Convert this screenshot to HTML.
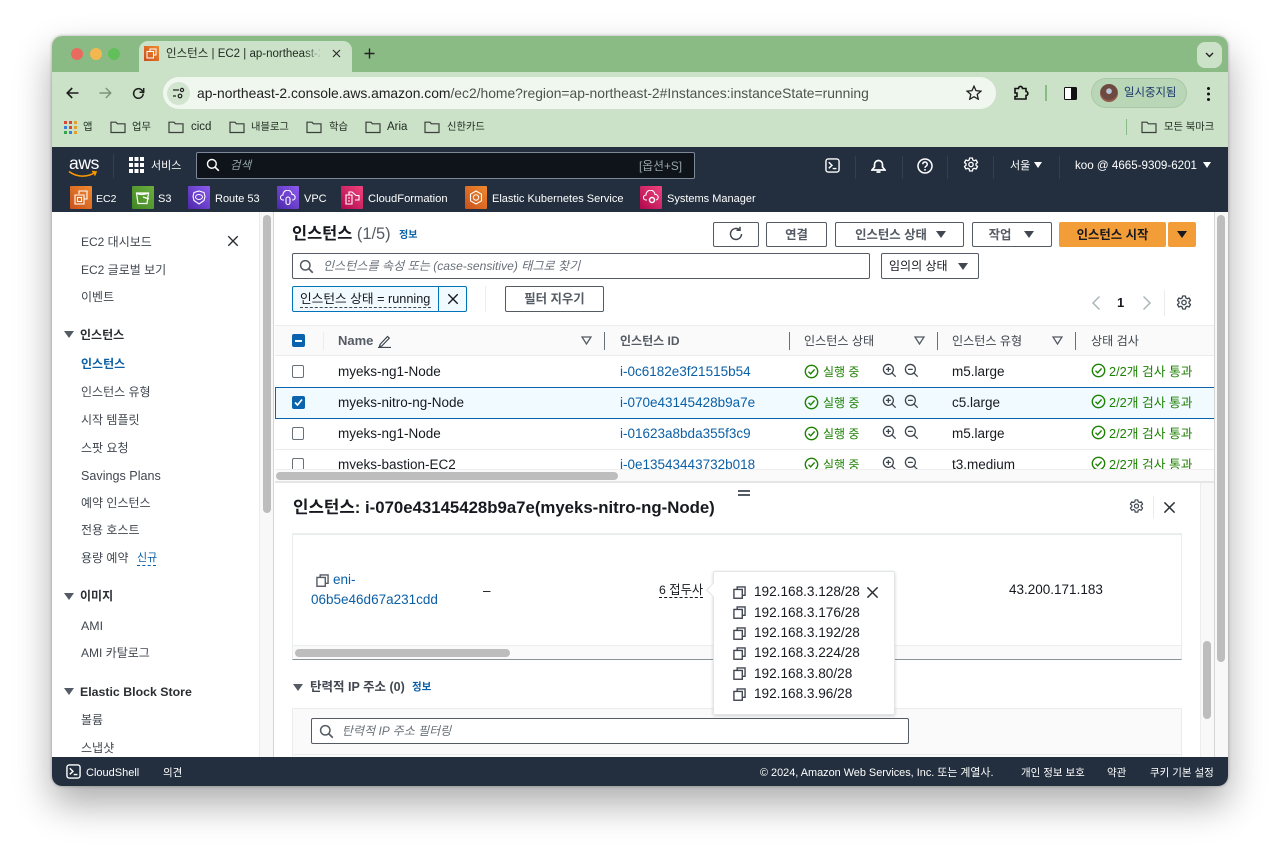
<!DOCTYPE html>
<html lang="ko"><head><meta charset="utf-8"><title>인스턴스 | EC2</title>
<style>
*{box-sizing:border-box}
html,body{margin:0;padding:0;width:1280px;height:854px;overflow:hidden;background:#fff;font-family:"Liberation Sans","Noto Sans CJK KR",sans-serif;color:#16191f}
.a{position:absolute}
.t{position:absolute;white-space:nowrap;line-height:20px;font-size:12px;height:20px;margin-top:1px}
.p{margin-top:0}
.b{font-weight:700}
.w{color:#fff}
.btn{position:absolute;border:1px solid #545b64;border-radius:2px;background:#fff;height:25px;font-size:12.4px;font-weight:700;color:#545b64;line-height:25px;text-align:center;white-space:nowrap}
.sep{position:absolute;width:1px}
.ic{position:absolute;fill:none;stroke:currentColor}
#win{position:absolute;left:52px;top:36px;width:1176px;height:750px;border-radius:10px;box-shadow:0 18px 38px rgba(0,0,0,.33),0 0 3px rgba(0,0,0,.3)}
#clip{position:absolute;left:52px;top:36px;width:1176px;height:750px;border-radius:10px;overflow:hidden;background:#fff}
#in{position:absolute;left:-52px;top:-36px;width:1280px;height:854px}
.nav{color:#414750;font-size:12px;margin-top:2px}
.tri{position:absolute;width:0;height:0;border-left:5px solid transparent;border-right:5px solid transparent;border-top:7px solid #545b64}
.trio{position:absolute}
.cb{position:absolute;left:292px;width:12px;height:13px;border:1px solid #687078;border-radius:2px;background:#fff}
.g{color:#1d8102}
.c{font-size:12.75px;margin-top:2px}
.l{color:#0b5fa5}
.r{font-size:13.5px}
.sv{position:absolute;top:186px;width:22px;height:23px;border-radius:1px}
.bm{font-size:10.3px;color:#1f2a1f;margin-top:2px}
.bl{font-size:11.5px;color:#1f2a1f;margin-top:1px}
.h{color:#414750;margin-top:2px}
.ns{background:#333f4e}
</style></head>
<body>
<svg width="0" height="0" style="position:absolute">
<defs>
<symbol id="copy" viewBox="0 0 14 14"><path d="M4.5 3.5V1h8.5v9h-3" fill="none" stroke="currentColor" stroke-width="1.5"/><rect x="1" y="3.7" width="9" height="9.5" fill="none" stroke="currentColor" stroke-width="1.5"/></symbol>
<symbol id="ok" viewBox="0 0 16 16"><circle cx="8" cy="8" r="6.6" fill="none" stroke="#1d8102" stroke-width="1.5"/><path d="M4.8 8.2l2.3 2.3 4.2-4.7" fill="none" stroke="#1d8102" stroke-width="1.5"/></symbol>
<symbol id="zi" viewBox="0 0 16 16"><circle cx="6.8" cy="6.8" r="5.3" fill="none" stroke="#414750" stroke-width="1.4"/><path d="M10.6 10.6l4 4M4.2 6.8h5.2M6.8 4.2v5.2" fill="none" stroke="#414750" stroke-width="1.4"/></symbol>
<symbol id="zo" viewBox="0 0 16 16"><circle cx="6.8" cy="6.8" r="5.3" fill="none" stroke="#414750" stroke-width="1.4"/><path d="M10.6 10.6l4 4M4.2 6.8h5.2" fill="none" stroke="#414750" stroke-width="1.4"/></symbol>
<symbol id="fold" viewBox="0 0 16 14"><path d="M1 2.2h5l1.4 1.6H15v8.7H1z" fill="none" stroke="#3a3f3a" stroke-width="1.2"/></symbol>
<symbol id="gear" viewBox="0 0 16 16"><path d="M6.6 1h2.8l.4 2 1.3.7 2-.7 1.4 2.5-1.5 1.3v1.4l1.5 1.3-1.4 2.5-2-.7-1.3.7-.4 2H6.6l-.4-2-1.3-.7-2 .7L1.5 9.5 3 8.2V6.8L1.5 5.5 2.9 3l2 .7 1.3-.7z" fill="none" stroke="currentColor" stroke-width="1.3" stroke-linejoin="round"/><circle cx="8" cy="7.5" r="2.2" fill="none" stroke="currentColor" stroke-width="1.3"/></symbol>
<symbol id="x" viewBox="0 0 14 14"><path d="M1.5 1.5l11 11M12.5 1.5l-11 11" fill="none" stroke="currentColor" stroke-width="1.6"/></symbol>
<symbol id="mag" viewBox="0 0 16 16"><circle cx="6.7" cy="6.7" r="5" fill="none" stroke="currentColor" stroke-width="1.6"/><path d="M10.3 10.3l4.4 4.4" fill="none" stroke="currentColor" stroke-width="1.8"/></symbol>
<symbol id="term" viewBox="0 0 16 16"><rect x="1" y="1" width="14" height="14" rx="2.5" fill="none" stroke="#fff" stroke-width="1.5"/><path d="M4 4.5l3.5 3.3L4 11M8.2 11.3h4" fill="none" stroke="#fff" stroke-width="1.5"/></symbol>
</defs>
</svg>

<div id="win"></div>
<div id="clip"><div id="in">

<!-- Chrome -->
<div class="a" style="left:52px;top:36px;width:1176px;height:37px;background:#8bbb85"></div>
<div class="a" style="left:52px;top:72px;width:1176px;height:75px;background:#cbe2c8"></div>
<div class="a" style="left:139px;top:41px;width:213px;height:32px;background:#cbe2c8;border-radius:9px 9px 0 0"></div>
<div class="a" style="left:70.5px;top:48px;width:12px;height:12px;border-radius:50%;background:#e96a5e"></div>
<div class="a" style="left:89.5px;top:48px;width:12px;height:12px;border-radius:50%;background:#f2b84f"></div>
<div class="a" style="left:107.5px;top:48px;width:12px;height:12px;border-radius:50%;background:#62c05a"></div>
<div class="a" style="left:144px;top:46px;width:15px;height:15px;background:linear-gradient(45deg,#c8511b,#f08a2f)"></div>
<svg class="ic" style="left:146px;top:48px;color:#fff" width="11" height="11" viewBox="0 0 11 11"><path d="M4 3V1h6v6H8M1 3.5h6.500V10H1z" stroke-width="1"/></svg>
<div class="t" style="left:166px;top:43px;font-size:11.5px;width:154px;overflow:hidden;color:#1f2a1f">인스턴스 | EC2 | ap-northeast-2</div>
<div class="a" style="left:304px;top:44px;width:18px;height:18px;background:linear-gradient(90deg,rgba(203,226,200,0),#cbe2c8)"></div>
<svg class="ic" style="left:332px;top:49px;color:#222" width="9" height="9"><use href="#x"/></svg>
<svg class="ic" style="left:364px;top:48px;color:#222" width="11" height="11" viewBox="0 0 11 11"><path d="M5.5 0.5v10M.5 5.5h10" stroke-width="1.4"/></svg>
<div class="a" style="left:1197px;top:42px;width:25px;height:26px;border-radius:8px;background:#cbe2c8"></div>
<svg class="ic" style="left:1205px;top:52px;color:#222" width="9" height="6" viewBox="0 0 9 6"><path d="M1 1l3.500 3.500L8 1" stroke-width="1.4"/></svg>

<svg class="ic" style="left:66px;top:87px;color:#1f1f1f" width="13" height="12" viewBox="0 0 13 12"><path d="M12.5 6H1.500M6.200 1L1.200 6l5 5" stroke-width="1.6"/></svg>
<svg class="ic" style="left:99px;top:87px;color:#7c917b" width="13" height="12" viewBox="0 0 13 12"><path d="M.5 6h11M6.800 1l5 5-5 5" stroke-width="1.4"/></svg>
<svg class="ic" style="left:132px;top:87px;color:#1f1f1f" width="13" height="13" viewBox="0 0 13 13"><path d="M11.200 6.500a4.800 4.800 0 1 1-1.300-3.300L11.500 5M11.700 1v4.200H7.500" stroke-width="1.5"/></svg>

<div class="a" style="left:163px;top:77px;width:833px;height:32px;border-radius:16px;background:#f0f7ef"></div>
<div class="a" style="left:167px;top:82px;width:23px;height:23px;border-radius:50%;background:#d2e5cf"></div>
<svg class="ic" style="left:172px;top:87px;color:#222" width="13" height="12" viewBox="0 0 13 12"><path d="M1 3h6M1 9h3" stroke-width="1.3"/><circle cx="10" cy="3" r="1.600" stroke-width="1.2"/><circle cx="8" cy="9" r="1.800" stroke-width="1.2"/></svg>
<div class="t" style="left:197px;top:82px;font-size:13.87px;color:#1f1f1f">ap-northeast-2.console.aws.amazon.com<span style="color:#4c544c">/ec2/home?region=ap-northeast-2#Instances:instanceState=running</span></div>
<svg class="ic" style="left:966px;top:85px;color:#222" width="16" height="15" viewBox="0 0 16 15"><path d="M8 1.200l2 4.500 4.900.5-3.700 3.200 1.100 4.800L8 11.700l-4.300 2.500 1.100-4.800L1.100 6.200 6 5.700z" stroke-width="1.3"/></svg>
<svg class="ic" style="left:1013px;top:85px;color:#111" width="16" height="16" viewBox="0 0 16 16"><path d="M2 3.500h3.500c0-2.800 4-2.800 4 0H13v3c2.500 0 2.500 4 0 4V14H2v-2.500h2v-3.500H2z" stroke-width="1.600"/></svg>
<div class="sep" style="left:1045px;top:85px;height:16px;background:#8bbb85;width:1.500px"></div>
<div class="a" style="left:1064px;top:87px;width:13px;height:13px;border:1.500px solid #111;border-radius:1.500px;background:linear-gradient(90deg,#fff 0,#fff 55%,#111 55%)"></div>
<div class="a" style="left:1091px;top:78px;width:96px;height:30px;border-radius:15px;background:#b9d6b6;border:1px solid #a8c9a6"></div>
<div class="a" style="left:1100px;top:84px;width:18px;height:18px;border-radius:50%;background:radial-gradient(circle at 50% 40%,#b9c6d8 0 18%,#6d4a40 22% 60%,#8f5a4a 62%)"></div>
<div class="t" style="left:1124px;top:82px;font-size:11.4px;color:#16356a">일시중지됨</div>
<div class="a" style="left:1206.500px;top:87px;width:3px;height:3px;border-radius:50%;background:#111;box-shadow:0 5.500px 0 #111,0 11px 0 #111"></div>

<svg class="a" style="left:64px;top:121px" width="13" height="13" viewBox="0 0 13 13"><g><rect x="0" y="0" width="3" height="3" fill="#d9453a"/><rect x="5" y="0" width="3" height="3" fill="#d9453a"/><rect x="10" y="0" width="3" height="3" fill="#e0a030"/><rect x="0" y="5" width="3" height="3" fill="#3a7fd9"/><rect x="5" y="5" width="3" height="3" fill="#d9453a"/><rect x="10" y="5" width="3" height="3" fill="#e0a030"/><rect x="0" y="10" width="3" height="3" fill="#3aa14f"/><rect x="5" y="10" width="3" height="3" fill="#3a7fd9"/><rect x="10" y="10" width="3" height="3" fill="#e0a030"/></g></svg>
<div class="t bm" style="left:83px;top:116px">앱</div>
<svg class="a" style="left:110px;top:120px" width="16" height="14"><use href="#fold"/></svg><div class="t bm" style="left:132px;top:116px">업무</div>
<svg class="a" style="left:168px;top:120px" width="16" height="14"><use href="#fold"/></svg><div class="t bl" style="left:191px;top:116px">cicd</div>
<svg class="a" style="left:229px;top:120px" width="16" height="14"><use href="#fold"/></svg><div class="t bm" style="left:251px;top:116px">내블로그</div>
<svg class="a" style="left:306px;top:120px" width="16" height="14"><use href="#fold"/></svg><div class="t bm" style="left:329px;top:116px">학습</div>
<svg class="a" style="left:365px;top:120px" width="16" height="14"><use href="#fold"/></svg><div class="t bl" style="left:387px;top:116px">Aria</div>
<svg class="a" style="left:424px;top:120px" width="16" height="14"><use href="#fold"/></svg><div class="t bm" style="left:447px;top:116px">신한카드</div>
<div class="sep" style="left:1125.500px;top:119px;height:16px;background:#8bbb85;width:1.500px"></div>
<svg class="a" style="left:1141px;top:120px" width="16" height="14"><use href="#fold"/></svg><div class="t bm" style="left:1164px;top:116px">모든 북마크</div>

<!-- AWS nav -->
<div class="a" style="left:52px;top:147px;width:1176px;height:65px;background:#232f3e"></div>
<div class="t w" style="left:69px;top:152px;font-size:17.500px;letter-spacing:-.4px">aws</div>
<svg class="ic" style="left:68px;top:170px;color:#f90" width="30" height="9" viewBox="0 0 30 9"><path d="M1 1.500c8 6 18 6 26 1M24 1.500l4 .5-1.500 3.500" stroke-width="1.600"/></svg>
<div class="sep ns" style="left:113px;top:154px;height:24px"></div>
<svg class="a" style="left:129px;top:157px" width="15" height="16" viewBox="0 0 15 16" fill="#fff"><rect width="4" height="4" x="0" y="0"/><rect width="4" height="4" x="5.500" y="0"/><rect width="4" height="4" x="11" y="0"/><rect width="4" height="4" x="0" y="6"/><rect width="4" height="4" x="5.500" y="6"/><rect width="4" height="4" x="11" y="6"/><rect width="4" height="4" x="0" y="12"/><rect width="4" height="4" x="5.500" y="12"/><rect width="4" height="4" x="11" y="12"/></svg>
<div class="t w" style="left:151px;top:155px;font-size:11px">서비스</div>
<div class="a" style="left:196px;top:152px;width:499px;height:27px;background:#0f141a;border:1px solid #7d8998;border-radius:2px"></div>
<svg class="a" style="left:206px;top:158px;color:#fff" width="14" height="14"><use href="#mag"/></svg>
<div class="t" style="left:230px;top:155px;font-size:11.500px;font-style:italic;color:#95a5a6">검색</div>
<div class="t" style="left:639px;top:155px;font-size:11.800px;color:#95a5a6">[옵션+S]</div>

<svg class="a" style="left:825px;top:158px" width="15" height="15"><use href="#term"/></svg>
<div class="sep ns" style="left:855px;top:156px;height:23px"></div>
<svg class="ic" style="left:871px;top:158px;color:#fff" width="15" height="16" viewBox="0 0 15 16"><path d="M1 12h13L11.500 9V6.500a4 4 0 0 0-8 0V9zM5.500 14h4" stroke-width="1.700"/></svg>
<div class="sep ns" style="left:902px;top:156px;height:23px"></div>
<svg class="ic" style="left:917px;top:158px;color:#fff" width="16" height="16" viewBox="0 0 16 16"><circle cx="8" cy="8" r="7" stroke-width="1.500"/><path d="M5.800 6.200a2.200 2.200 0 1 1 3.300 1.900c-.8.500-1.100.9-1.100 1.800M8 11v1.600" stroke-width="1.500"/></svg>
<div class="sep ns" style="left:947px;top:156px;height:23px"></div>
<svg class="a" style="left:963px;top:157px;color:#fff" width="16" height="16"><use href="#gear"/></svg>
<div class="sep ns" style="left:993px;top:156px;height:23px"></div>
<div class="t w" style="left:1010px;top:155px;font-size:11px">서울</div>
<div class="a" style="left:1034px;top:162px;border-left:4px solid transparent;border-right:4px solid transparent;border-top:6px solid #fff"></div>
<div class="sep ns" style="left:1059px;top:156px;height:23px"></div>
<div class="t w" style="left:1075px;top:155px;font-size:11.600px">koo @ 4665-9309-6201</div>
<div class="a" style="left:1203px;top:162px;border-left:4px solid transparent;border-right:4px solid transparent;border-top:6px solid #fff"></div>

<div class="sv" style="left:70px;background:linear-gradient(45deg,#c8511b,#f08a2f)"></div>
<svg class="ic" style="left:74px;top:190px;color:#fff" width="14" height="15" viewBox="0 0 14 15"><path d="M5 4V1h8v8h-3M1 5h9v9H1zM3.500 7.500h4v4h-4z" stroke-width="1.100"/></svg>
<div class="t w" style="left:96px;top:188px;font-size:10.500px">EC2</div>
<div class="sv" style="left:132px;background:linear-gradient(45deg,#3f8624,#6cae3e)"></div>
<svg class="ic" style="left:135px;top:191px;color:#fff" width="16" height="14" viewBox="0 0 16 14"><path d="M1.500 2h12l-1.500 10.500H3zM1.500 2c3 2 8 2 12 0M8 6l6 2" stroke-width="1.200"/></svg>
<div class="t w" style="left:158px;top:188px;font-size:11px">S3</div>
<div class="sv" style="left:188px;background:linear-gradient(45deg,#4d27aa,#8c5cf0)"></div>
<svg class="ic" style="left:192px;top:190px;color:#fff" width="14" height="15" viewBox="0 0 14 15"><path d="M7 1l5 1.500 1 4-1 4-5 3.500-5-3.500-1-4 1-4z" stroke-width="1.100"/><ellipse cx="7" cy="7" rx="3.500" ry="2.500" stroke-width="1"/></svg>
<div class="t w" style="left:215px;top:188px;font-size:11px">Route 53</div>
<div class="sv" style="left:277px;background:linear-gradient(45deg,#4d27aa,#8c5cf0)"></div>
<svg class="ic" style="left:280px;top:190px;color:#fff" width="16" height="15" viewBox="0 0 16 15"><path d="M4 10H3a2.500 2.500 0 0 1 0-5 4.500 4.500 0 0 1 9-.5 2.800 2.800 0 0 1 1 5.500h-1" stroke-width="1.100"/><rect x="6" y="7" width="4" height="7.500" rx="2" stroke-width="1.100"/></svg>
<div class="t w" style="left:304px;top:188px;font-size:11px">VPC</div>
<div class="sv" style="left:341px;background:linear-gradient(45deg,#b0084d,#f0447e)"></div>
<svg class="ic" style="left:345px;top:190px;color:#fff" width="15" height="15" viewBox="0 0 15 15"><path d="M1 5h6v9H1zM4 5V2h3l4 3.500h3V10h-4M3 8h2M3 11h2" stroke-width="1.100"/></svg>
<div class="t w" style="left:368px;top:188px;font-size:11.200px">CloudFormation</div>
<div class="sv" style="left:465px;background:linear-gradient(45deg,#c8511b,#f08a2f)"></div>
<svg class="ic" style="left:469px;top:190px;color:#fff" width="14" height="15" viewBox="0 0 14 15"><path d="M7 1l5.500 3.200v6.600L7 14l-5.500-3.200V4.200z" stroke-width="1.100"/><circle cx="7" cy="7.500" r="2.700" stroke-width="1"/></svg>
<div class="t w" style="left:492px;top:188px;font-size:11px">Elastic Kubernetes Service</div>
<div class="sv" style="left:640px;background:linear-gradient(45deg,#b0084d,#f0447e)"></div>
<svg class="ic" style="left:643px;top:190px;color:#fff" width="16" height="15" viewBox="0 0 16 15"><path d="M4 10H3a2.500 2.500 0 0 1 0-5 4.500 4.500 0 0 1 9-.5 2.800 2.800 0 0 1 1 5.500" stroke-width="1.100"/><circle cx="9" cy="10" r="2.500" stroke-width="1.500"/></svg>
<div class="t w" style="left:667px;top:188px;font-size:11px">Systems Manager</div>

<!-- Sidebar -->
<div class="a" style="left:259px;top:212px;width:15px;height:545px;background:#f8f8f8;border-left:1px solid #ececec;border-right:1px solid #d5d5d5"></div>
<div class="a" style="left:263px;top:215px;width:8px;height:298px;border-radius:4px;background:#bdbdbd"></div>
<div class="t nav" style="left:81px;top:230px">EC2 대시보드</div>
<svg class="a" style="left:227px;top:235px;color:#2a2e33" width="12" height="12"><use href="#x"/></svg>
<div class="t nav" style="left:81px;top:258px">EC2 글로벌 보기</div>
<div class="t nav" style="left:81px;top:285px">이벤트</div>
<div class="tri" style="left:64px;top:331px"></div><div class="t b" style="left:80px;top:324px;color:#2a2e33">인스턴스</div>
<div class="t b" style="left:81px;top:353px;color:#0b5fa5">인스턴스</div>
<div class="t nav" style="left:81px;top:380px">인스턴스 유형</div>
<div class="t nav" style="left:81px;top:408px">시작 템플릿</div>
<div class="t nav" style="left:81px;top:436px">스팟 요청</div>
<div class="t nav" style="left:81px;top:464px;font-size:12.600px">Savings Plans</div>
<div class="t nav" style="left:81px;top:491px">예약 인스턴스</div>
<div class="t nav" style="left:81px;top:518px">전용 호스트</div>
<div class="t nav" style="left:81px;top:546px">용량 예약</div>
<div class="t b" style="left:137px;top:547px;color:#0b5fa5;font-size:11px;font-weight:400;border-bottom:0">신규</div>
<div class="a" style="left:137px;top:565px;width:19px;border-top:1px dashed #0b5fa5"></div>
<div class="tri" style="left:64px;top:593px"></div><div class="t b" style="left:80px;top:585px;color:#2a2e33">이미지</div>
<div class="t nav" style="left:81px;top:614px;font-size:12.400px">AMI</div>
<div class="t nav" style="left:81px;top:641px">AMI 카탈로그</div>
<div class="tri" style="left:64px;top:688px"></div><div class="t b" style="left:80px;top:681px;color:#2a2e33;font-size:12.350px">Elastic Block Store</div>
<div class="t nav" style="left:81px;top:708px">볼륨</div>
<div class="t nav" style="left:81px;top:736px">스냅샷</div>

<!-- Top panel -->
<div class="t b" style="left:292px;top:223px;font-size:16.400px">인스턴스 <span style="font-weight:400;color:#545b64">(1/5)</span></div>
<div class="t" style="left:399px;top:225px;font-size:10px;font-weight:700;color:#0b5fa5">정보</div>
<div class="btn" style="left:713px;top:222px;width:46px"></div>
<svg class="ic" style="left:728px;top:226px;color:#414750" width="16" height="16" viewBox="0 0 16 16"><path d="M13.500 8a5.500 5.500 0 1 1-2-4.300M12 .8v3.400H8.500" stroke-width="1.500"/></svg>
<div class="btn" style="left:766px;top:222px;width:61px">연결</div>
<div class="btn" style="left:835px;top:222px;width:129px;padding-right:17px">인스턴스 상태</div><div class="tri" style="left:936px;top:231px;border-top-color:#414750"></div>
<div class="btn" style="left:972px;top:222px;width:80px;padding-right:24px">작업</div><div class="tri" style="left:1024px;top:231px;border-top-color:#414750"></div>
<div class="btn" style="left:1059px;top:222px;width:107px;background:#f29d38;border-color:#f29d38;color:#16191f">인스턴스 시작</div>
<div class="btn" style="left:1168px;top:222px;width:28px;background:#f29d38;border-color:#f29d38"></div><div class="tri" style="left:1177px;top:231px;border-top-color:#16191f"></div>

<div class="a" style="left:292px;top:253px;width:578px;height:26px;border:1px solid #545b64;border-radius:2px"></div>
<svg class="a" style="left:299px;top:259px;color:#545b64" width="15" height="15"><use href="#mag"/></svg>
<div class="t" style="left:323px;top:255px;font-style:italic;color:#687078;font-size:12.100px">인스턴스를 속성 또는 (case-sensitive) 태그로 찾기</div>
<div class="a" style="left:881px;top:253px;width:98px;height:26px;border:1px solid #545b64;border-radius:2px"></div>
<div class="t" style="left:889px;top:255px;color:#16191f">임의의 상태</div>
<div class="tri" style="left:958px;top:263px;border-top-color:#414750"></div>

<div class="a" style="left:292px;top:286px;width:175px;height:26px;border:1px solid #0073bb;border-radius:2px;background:#f1faff"></div>
<div class="a" style="left:438px;top:286px;width:1px;height:26px;background:#0073bb"></div>
<div class="t" style="left:300px;top:288px;font-size:12.700px">인스턴스 상태 = running</div>
<div class="a" style="left:300px;top:307px;width:131px;border-top:1px dashed #414750"></div>
<svg class="a" style="left:447px;top:293px;color:#16191f" width="12" height="12"><use href="#x"/></svg>
<div class="sep" style="left:485px;top:286px;height:26px;background:#eaeded"></div>
<div class="btn" style="left:505px;top:286px;width:99px;height:26px;line-height:25px">필터 지우기</div>

<svg class="ic" style="left:1091px;top:295px;color:#aab7b8" width="10" height="16" viewBox="0 0 10 16"><path d="M8.500 1.500L2 8l6.500 6.500" stroke-width="1.500"/></svg>
<div class="t b" style="left:1117px;top:292px;font-size:13px">1</div>
<svg class="ic" style="left:1142px;top:295px;color:#aab7b8" width="10" height="16" viewBox="0 0 10 16"><path d="M1.500 1.500L8 8l-6.500 6.500" stroke-width="1.500"/></svg>
<div class="sep" style="left:1164px;top:290px;height:26px;background:#eaeded"></div>
<svg class="a" style="left:1176px;top:295px;color:#414750" width="16" height="16"><use href="#gear"/></svg>

<!-- Table -->
<div class="a" style="left:275px;top:325px;width:940px;height:31px;background:#fafafa;border-top:1px solid #eaeded;border-bottom:1px solid #eaeded"></div>
<div class="a" style="left:292px;top:334px;width:13px;height:13px;border-radius:2px;background:#0b63ad"></div><div class="a" style="left:295px;top:340px;width:7px;height:2px;background:#fff"></div>
<div class="sep" style="left:323px;top:332px;height:18px;background:#eaeded"></div>
<div class="t b" style="left:338px;top:330px;color:#545b64;font-size:13px">Name</div>
<svg class="ic" style="left:378px;top:334px;color:#414750" width="14" height="14" viewBox="0 0 14 14"><path d="M2 10.500L9.500 2.500l1.800 1.700L3.800 12 1.500 12.500zM0 13.500h13" stroke-width="1.200"/></svg>
<svg class="trio" style="left:581px;top:336px" width="11" height="9" viewBox="0 0 11 9"><path d="M1 1h9L5.500 8z" fill="none" stroke="#545b64" stroke-width="1.300"/></svg>
<div class="sep" style="left:604px;top:332px;height:18px;background:#687078"></div>
<div class="t b" style="left:620px;top:330px;color:#545b64">인스턴스 ID</div>
<div class="sep" style="left:789px;top:332px;height:18px;background:#687078"></div>
<div class="t h" style="left:804px;top:329px;font-size:12.100px">인스턴스 상태</div>
<svg class="trio" style="left:914px;top:336px" width="11" height="9" viewBox="0 0 11 9"><path d="M1 1h9L5.500 8z" fill="none" stroke="#545b64" stroke-width="1.300"/></svg>
<div class="sep" style="left:937px;top:332px;height:18px;background:#687078"></div>
<div class="t h" style="left:952px;top:329px;font-size:12.100px">인스턴스 유형</div>
<svg class="trio" style="left:1052px;top:336px" width="11" height="9" viewBox="0 0 11 9"><path d="M1 1h9L5.500 8z" fill="none" stroke="#545b64" stroke-width="1.300"/></svg>
<div class="sep" style="left:1075px;top:332px;height:18px;background:#687078"></div>
<div class="t h" style="left:1091px;top:329px;font-size:12.100px">상태 검사</div>
<div class="sep" style="left:1214px;top:332px;height:18px;background:#687078"></div>

<div class="a" style="left:275px;top:387px;width:940px;height:32px;background:#f1faff;border:1px solid #0b63ad;border-right:0;border-left:1px solid #0b63ad"></div>
<div class="a" style="left:275px;top:449px;width:940px;height:1px;background:#eaeded"></div>

<div class="cb" style="top:365px"></div>
<div class="t r" style="left:338px;top:361px">myeks-ng1-Node</div>
<div class="t r l" style="left:620px;top:361px">i-0c6182e3f21515b54</div>
<svg class="a" style="left:804px;top:364px" width="15" height="15"><use href="#ok"/></svg><div class="t g" style="left:823px;top:361px">실행 중</div>
<svg class="a" style="left:882px;top:363px" width="15" height="15"><use href="#zi"/></svg><svg class="a" style="left:904px;top:363px" width="15" height="15"><use href="#zo"/></svg>
<div class="t r" style="left:952px;top:361px">m5.large</div>
<svg class="a" style="left:1091px;top:363px" width="15" height="15"><use href="#ok"/></svg><div class="t g c" style="left:1109px;top:360px">2/2개 검사 통과</div>

<div class="a" style="left:292px;top:396px;width:13px;height:13px;border-radius:2px;background:#0b63ad"></div>
<svg class="ic" style="left:294px;top:398px;color:#fff" width="9" height="9" viewBox="0 0 9 9"><path d="M1 4.500l2.500 2.500L8 1.500" stroke-width="1.700"/></svg>
<div class="t r" style="left:338px;top:392px">myeks-nitro-ng-Node</div>
<div class="t r l" style="left:620px;top:392px">i-070e43145428b9a7e</div>
<svg class="a" style="left:804px;top:395px" width="15" height="15"><use href="#ok"/></svg><div class="t g" style="left:823px;top:392px">실행 중</div>
<svg class="a" style="left:882px;top:394px" width="15" height="15"><use href="#zi"/></svg><svg class="a" style="left:904px;top:394px" width="15" height="15"><use href="#zo"/></svg>
<div class="t r" style="left:952px;top:392px">c5.large</div>
<svg class="a" style="left:1091px;top:394px" width="15" height="15"><use href="#ok"/></svg><div class="t g c" style="left:1109px;top:391px">2/2개 검사 통과</div>

<div class="cb" style="top:427px"></div>
<div class="t r" style="left:338px;top:423px">myeks-ng1-Node</div>
<div class="t r l" style="left:620px;top:423px">i-01623a8bda355f3c9</div>
<svg class="a" style="left:804px;top:426px" width="15" height="15"><use href="#ok"/></svg><div class="t g" style="left:823px;top:423px">실행 중</div>
<svg class="a" style="left:882px;top:425px" width="15" height="15"><use href="#zi"/></svg><svg class="a" style="left:904px;top:425px" width="15" height="15"><use href="#zo"/></svg>
<div class="t r" style="left:952px;top:423px">m5.large</div>
<svg class="a" style="left:1091px;top:425px" width="15" height="15"><use href="#ok"/></svg><div class="t g c" style="left:1109px;top:422px">2/2개 검사 통과</div>

<div class="cb" style="top:458px"></div>
<div class="t r" style="left:338px;top:454px">myeks-bastion-EC2</div>
<div class="t r l" style="left:620px;top:454px">i-0e13543443732b018</div>
<svg class="a" style="left:804px;top:457px" width="15" height="15"><use href="#ok"/></svg><div class="t g" style="left:823px;top:454px">실행 중</div>
<svg class="a" style="left:882px;top:456px" width="15" height="15"><use href="#zi"/></svg><svg class="a" style="left:904px;top:456px" width="15" height="15"><use href="#zo"/></svg>
<div class="t r" style="left:952px;top:454px">t3.medium</div>
<svg class="a" style="left:1091px;top:456px" width="15" height="15"><use href="#ok"/></svg><div class="t g c" style="left:1109px;top:453px">2/2개 검사 통과</div>

<div class="a" style="left:275px;top:469px;width:940px;height:12px;background:#fafafa;border-top:1px solid #eee"></div>
<div class="a" style="left:276px;top:472px;width:342px;height:8px;border-radius:4px;background:#bdbdbd"></div>
<div class="a" style="left:275px;top:481px;width:940px;height:2px;background:#e4e6e6"></div>

<!-- Right scrollbars -->
<div class="a" style="left:1214px;top:212px;width:14px;height:545px;background:#f8f8f8;border-left:1px solid #d5d5d5"></div>
<div class="a" style="left:1217px;top:215px;width:8px;height:447px;border-radius:4px;background:#bdbdbd"></div>

<!-- Detail panel -->
<div class="a" style="left:738px;top:490px;width:12px;height:1.500px;background:#545b64"></div>
<div class="a" style="left:738px;top:494px;width:12px;height:1.500px;background:#545b64"></div>
<div class="t b" style="left:293px;top:498px;font-size:16.800px;line-height:18px">인스턴스: i-070e43145428b9a7e(myeks-nitro-ng-Node)</div>
<svg class="a" style="left:1129px;top:499px;color:#414750" width="15" height="15"><use href="#gear"/></svg>
<div class="sep" style="left:1153px;top:496px;height:22px;background:#eaeded"></div>
<svg class="a" style="left:1163px;top:501px;color:#2a2e33" width="13" height="13"><use href="#x"/></svg>

<div class="a" style="left:1200px;top:483px;width:14px;height:274px;background:#f8f8f8;border-left:1px solid #ececec"></div>
<div class="a" style="left:1203px;top:641px;width:8px;height:78px;border-radius:4px;background:#bdbdbd"></div>

<div class="a" style="left:292px;top:533px;width:890px;height:127px;border:1px solid #eaeded;border-top:2px solid #eaeded;border-bottom:1px solid #879596"></div>
<div class="a" style="left:293px;top:645px;width:888px;height:14px;background:#fafafa;border-top:1px solid #eaeded"></div>
<div class="a" style="left:295px;top:649px;width:215px;height:8px;border-radius:4px;background:#bdbdbd"></div>
<svg class="a" style="left:316px;top:574px;color:#545b64" width="13" height="13"><use href="#copy"/></svg>
<div class="t r l" style="left:333px;top:570px;margin-top:0">eni-</div>
<div class="t r l" style="left:311px;top:590px;margin-top:0">06b5e46d67a231cdd</div>
<div class="t r" style="left:483px;top:581px;margin-top:0">–</div>
<div class="t p" style="left:659px;top:580px;font-size:12.300px">6 접두사</div>
<div class="a" style="left:659px;top:597px;width:44px;border-top:1px dashed #16191f"></div>
<div class="t r p" style="left:1009px;top:580px">43.200.171.183</div>

<div class="tri" style="left:293px;top:684px;border-left-width:5px;border-right-width:5px;border-top-color:#545b64"></div>
<div class="t b" style="left:310px;top:676px;font-size:12.500px;color:#414750">탄력적 IP 주소 (0)</div>
<div class="t" style="left:412px;top:676px;font-size:10.500px;color:#0b5fa5;font-weight:700">정보</div>
<div class="a" style="left:292px;top:708px;width:890px;height:49px;background:#fafafa;border:1px solid #eaeded;border-bottom:0"></div>
<div class="a" style="left:292px;top:754px;width:890px;height:1px;background:#eaeded"></div>
<div class="a" style="left:311px;top:718px;width:598px;height:26px;border:1px solid #545b64;border-radius:2px;background:#fff"></div>
<svg class="a" style="left:319px;top:724px;color:#545b64" width="15" height="15"><use href="#mag"/></svg>
<div class="t" style="left:342px;top:720px;font-style:italic;color:#687078">탄력적 IP 주소 필터링</div>

<!-- Popover -->
<div class="a" style="left:713px;top:571px;width:182px;height:144px;background:#fff;border:1px solid #e3e6e6;border-radius:2px;box-shadow:0 1px 3px rgba(0,21,41,.18)"></div>
<div class="a" style="left:708px;top:585px;width:10px;height:10px;background:#fff;transform:rotate(45deg);border-left:1px solid #e3e6e6;border-bottom:1px solid #e3e6e6"></div>
<svg class="a" style="left:733px;top:586px;color:#414750" width="13" height="13"><use href="#copy"/></svg><div class="t r p" style="left:754px;top:582px;font-size:13.600px">192.168.3.128/28</div>
<svg class="a" style="left:866px;top:586px;color:#2a2e33" width="13" height="13"><use href="#x"/></svg>
<svg class="a" style="left:733px;top:606px;color:#414750" width="13" height="13"><use href="#copy"/></svg><div class="t r p" style="left:754px;top:603px;font-size:13.600px">192.168.3.176/28</div>
<svg class="a" style="left:733px;top:627px;color:#414750" width="13" height="13"><use href="#copy"/></svg><div class="t r p" style="left:754px;top:623px;font-size:13.600px">192.168.3.192/28</div>
<svg class="a" style="left:733px;top:647px;color:#414750" width="13" height="13"><use href="#copy"/></svg><div class="t r p" style="left:754px;top:643px;font-size:13.600px">192.168.3.224/28</div>
<svg class="a" style="left:733px;top:667px;color:#414750" width="13" height="13"><use href="#copy"/></svg><div class="t r p" style="left:754px;top:664px;font-size:13.600px">192.168.3.80/28</div>
<svg class="a" style="left:733px;top:688px;color:#414750" width="13" height="13"><use href="#copy"/></svg><div class="t r p" style="left:754px;top:684px;font-size:13.600px">192.168.3.96/28</div>

<!-- Footer -->
<div class="a" style="left:52px;top:757px;width:1176px;height:29px;background:#232f3e"></div>
<svg class="a" style="left:66px;top:764px" width="15" height="15"><use href="#term"/></svg>
<div class="t w" style="left:86px;top:762px;font-size:11px">CloudShell</div>
<div class="t w" style="left:163px;top:762px;font-size:10.500px">의견</div>
<div class="t w" style="left:760px;top:762px;font-size:10.900px">© 2024, Amazon Web Services, Inc. 또는 계열사.</div>
<div class="t w" style="left:1021px;top:762px;font-size:10.500px">개인 정보 보호</div>
<div class="t w" style="left:1107px;top:762px;font-size:10.500px">약관</div>
<div class="t w" style="left:1150px;top:762px;font-size:10.500px">쿠키 기본 설정</div>

</div></div>
</body></html>
